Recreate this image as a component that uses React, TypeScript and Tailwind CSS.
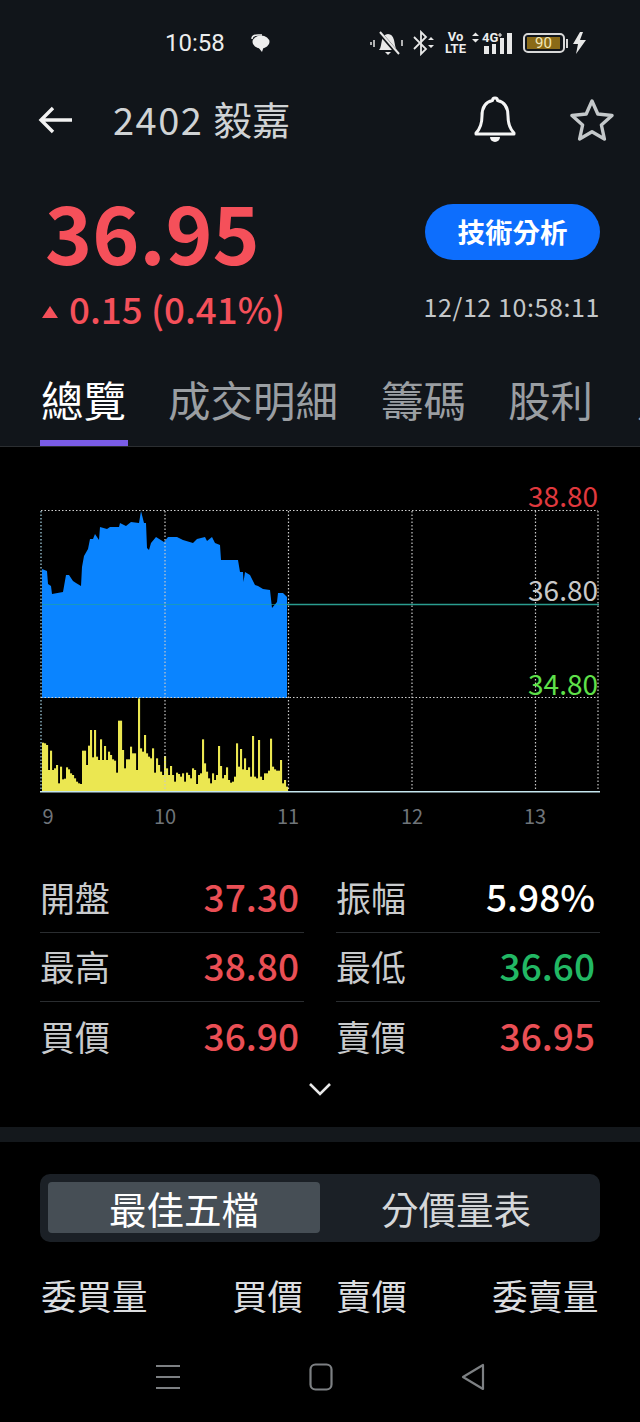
import React from "react";

const areaPoints =
  "42,569 47,571 48,584 51,586 52,594 63,592 66,575 69,575 73,581 76,583 81,586 82,567 84,556 88,549 90,539 93,539 95,534 99,540 100,527 107,529 110,527 119,527 120,523 126,526 131,522 139,523 141,511 144,523 146,523 147,548 149,550 151,543 156,537 164,542 168,537 177,537 183,540 193,543 197,539 205,537 207,541 212,537 215,543 220,545 221,560 238,560 240,572 243,572 243.5,582 245,572 250,575 255,585 258,586 263,589 270,590 272,608 277,602 278,593 283,593 287,597 287,698 42,698";

const volTops = [
  188, 190, 195, 270, 212, 270, 265, 255, 310, 260, 298, 296, 262, 268, 280, 285, 295, 305, 310, 312, 212, 212, 255, 197, 150, 232, 150, 230, 240, 178, 240, 198,
  240, 215, 225, 238, 242, 278, 122, 122, 210, 265, 238, 238, 200, 220, 220, 270, 55, 205, 215, 165, 220, 230, 235, 205, 278, 235, 255, 275, 285, 228, 265, 285,
  258, 285, 305, 278, 282, 290, 280, 305, 278, 285, 295, 265, 270, 312, 285, 280, 178, 250, 275, 295, 310, 280, 300, 285, 198, 258, 295, 285, 262, 300, 308, 305,
  290, 190, 260, 207, 268, 235, 270, 262, 290, 168, 290, 295, 180, 290, 300, 280, 280, 272, 176, 260, 268, 272, 272, 240, 310, 300, 320,
];

function Chart() {
  const vx = [41, 165, 288.5, 412, 535.5, 598];
  const hy = [510.5, 697.5];
  return (
    <div className="relative h-[384px] w-full">
      <svg width="640" height="384" viewBox="0 447 640 384" className="block">
        <polygon points={areaPoints} fill="#0a84ff" />
        {volTops.map((t, i) => {
          const top = t / 3 + 680;
          return <rect key={i} x={42 + i * 2} y={top} width={2.1} height={791.5 - top} fill="#ebe751" />;
        })}
        {vx.map((x) => (
          <line key={x} x1={x} x2={x} y1={511} y2={792} stroke={x === 41 ? "#a9d8e8" : "#c8c8c8"} strokeWidth={1.2} strokeDasharray="1.5 2" />
        ))}
        {hy.map((y) => (
          <line key={y} x1={41} x2={598} y1={y} y2={y} stroke="#cfcfcf" strokeWidth={1.2} strokeDasharray="1.5 2" />
        ))}
        <line x1={42} x2={287} y1={604.5} y2={604.5} stroke="#1ea59a" strokeOpacity={0.6} strokeWidth={1} />
        <line x1={287} x2={599} y1={604.5} y2={604.5} stroke="#2a9d8f" strokeWidth={1.3} />
        <line x1={40} x2={600} y1={791.8} y2={791.8} stroke="#c5e6ee" strokeWidth={1.6} />
        <g fontFamily="'Noto Sans CJK TC', sans-serif" fontSize="20" fill="#6f7479">
          <text x={48} y={824} textAnchor="middle">9</text>
          <text x={165} y={824} textAnchor="middle">10</text>
          <text x={288} y={824} textAnchor="middle">11</text>
          <text x={412} y={824} textAnchor="middle">12</text>
          <text x={535} y={824} textAnchor="middle">13</text>
        </g>
        <g fontFamily="'Noto Sans CJK TC', sans-serif" fontSize="28" textAnchor="end">
          <text x={598} y={507} fill="#e0393e">38.80</text>
          <text x={598} y={601} fill="#c9c9c9">36.80</text>
          <text x={598} y={695} fill="#5fe04a">34.80</text>
        </g>
      </svg>
    </div>
  );
}

function StatCell({ label, value, color }: { label: string; value: string; color: string }) {
  return (
    <div className="flex items-center justify-between h-[69.5px] pr-[5px] pb-[2px] border-b border-[#2a2d30] last:border-b-0">
      <span className="text-[35px] text-[#c9cbcd] leading-none">{label}</span>
      <span className={`text-[37px] font-medium leading-none ${color}`}>{value}</span>
    </div>
  );
}

function StatusBar() {
  return (
    <div className="h-[86px] flex items-center pl-[165px] pr-[54px] text-[#eceded]">
      <span className="text-[24px] leading-none w-[62px] font-[Roboto,sans-serif]">10:58</span>
      <svg width="22" height="20" viewBox="0 0 22 20" className="ml-[22px]">
        <ellipse cx="12" cy="9" rx="8.500" ry="6.500" fill="#eee" />
        <path d="M3 6c0-3 3-4 6-4h4" stroke="#eee" strokeWidth="1.500" fill="none" />
        <path d="M9 14l4 5 2-6z" fill="#eee" />
      </svg>
      <div className="flex-1" />
      <svg width="34" height="26" viewBox="0 0 34 26" className="mr-[8px]">
        <path d="M9 20c2-2 2-6 3-10 1-4 3-6 6-6s5 2 6 6c1 4 1 8 3 10z" fill="#e8e8e8" />
        <path d="M15 22h6l-3 3z" fill="#e8e8e8" />
        <path d="M9 2l19 22" stroke="#111519" strokeWidth="4" />
        <path d="M10 2l19 22" stroke="#e8e8e8" strokeWidth="2" />
        <path d="M1 12v3M4 10v7M32 10v6" stroke="#e8e8e8" strokeWidth="1.500" />
      </svg>
      <svg width="24" height="26" viewBox="0 0 24 26" className="mr-[11px]">
        <path d="M2 7l12 12-5 5V2l5 5L2 19" stroke="#e8e8e8" strokeWidth="1.800" fill="none" />
        <path d="M16 10l3-3 3 3zM16 15h6l-3 3z" fill="#e8e8e8" />
      </svg>
      <div className="flex flex-col items-center mr-[8px] text-[13px] font-bold leading-[12.5px] w-[17px] font-[Roboto,sans-serif]">
        <span>Vo</span>
        <span>LTE</span>
      </div>
      <div className="relative w-[40px] h-[22px] mr-[11px] font-[Roboto,sans-serif]">
        <span className="absolute left-[10px] top-[-1px] text-[13px] font-bold leading-[13px]">4G</span>
        <svg width="40" height="22" viewBox="0 0 40 22" className="absolute left-0 top-0">
          <path d="M0 4l3.500-3.500L7 4zM0 7h7l-3.500 3.500z" fill="#e8e8e8" />
          <path d="M26 3h4M28 1v4" stroke="#e8e8e8" strokeWidth="1.200" />
          <rect x="12" y="14" width="5" height="8" fill="#e8e8e8" />
          <rect x="20" y="12" width="4" height="10" fill="#e8e8e8" />
          <rect x="28" y="6" width="4" height="16" fill="#e8e8e8" />
          <rect x="35" y="1" width="5" height="21" fill="#e8e8e8" />
        </svg>
      </div>
      <div className="flex items-center mr-[5px]">
        <div className="w-[42px] h-[20px] border-2 border-[#d8d8d8] rounded-[5px] p-[2px]">
          <div className="w-[33px] h-full bg-[#8a6a17] flex items-center justify-center text-[15px] leading-none text-[#f2e7b8] font-[Roboto,sans-serif]">90</div>
        </div>
        <div className="w-[2px] h-[9px] bg-[#d8d8d8] ml-[1px]" />
      </div>
      <svg width="13" height="22" viewBox="0 0 13 22">
        <path d="M7 0L0 12h5l-2 10 10-14H7l3-8z" fill="#e8e8e8" />
      </svg>
    </div>
  );
}

export default function App() {
  return (
    <div className="w-[640px] h-[1422px] overflow-hidden bg-black text-white font-['Noto_Sans_CJK_TC',sans-serif]">
      <div className="bg-[#11151a] h-[447px] border-b border-[#2b2e31]">
        <StatusBar />
        <div className="h-[68px] flex items-center pl-[38px] pr-[26px]">
          <svg width="36" height="30" viewBox="0 0 36 30" className="mr-[39px]">
            <path d="M34 15H3M15 3L3 15l12 12" stroke="#f2f2f2" strokeWidth="3.400" fill="none" />
          </svg>
          <span className="flex items-baseline leading-none text-[#d0d3d5] whitespace-nowrap pb-[4px]">
            <span className="text-[38px] tracking-[1.500px]">2402</span>
            <span className="text-[38.500px] ml-[10px]">毅嘉</span>
          </span>
          <div className="flex-1" />
          <svg width="44" height="50" viewBox="0 0 44 50" className="mr-[53px]">
            <path d="M22 3c1.500 0 2.500 1 2.500 2.500C32 7 35 13 35 21c0 9 2 13 6 17v1H3v-1c4-4 6-8 6-17 0-8 3-14 10.500-15.500C19.500 4 20.500 3 22 3z" fill="none" stroke="#f5f5f5" strokeWidth="3" strokeLinejoin="round" />
            <path d="M17 42a5 5 0 0 0 10 0z" fill="#f5f5f5" />
          </svg>
          <svg width="44" height="44" viewBox="0 0 44 44">
            <path d="M22 3l5.800 13 14.200 1.500-10.600 9.500 3 14L22 33.800 9.600 41l3-14L2 17.500 16.200 16z" fill="none" stroke="#c4c8ca" strokeWidth="3.400" strokeLinejoin="round" />
          </svg>
        </div>
        <div className="flex items-start justify-between pl-[45px] pr-[40px] pt-[36px] h-[216px]">
          <div className="flex flex-col">
            <span className="text-[80px] leading-[80px] font-bold text-[#f5505a]">36.95</span>
            <div className="flex items-center mt-[18px]">
              <span className="w-0 h-0 border-x-[8px] border-x-transparent border-b-[12px] border-b-[#f5505a] mr-[11px] ml-[-3px] mt-[8px]" />
              <span className="text-[36.700px] leading-[40px] font-medium text-[#f5505a] whitespace-nowrap">0.15 (0.41%)</span>
            </div>
          </div>
          <div className="flex flex-col items-end">
            <div className="w-[175px] h-[56px] rounded-[28px] bg-[#0d6efd] flex items-center justify-center text-[27.500px] font-bold mt-[14px] pb-[1px]">技術分析</div>
            <span className="text-[25px] tracking-[0.600px] leading-none mt-[34px] text-[#c4c7c9] whitespace-nowrap">12/12 10:58:11</span>
          </div>
        </div>
        <div className="flex h-[76px] pl-[40px] text-[42.500px] leading-[50px] text-[#9a9ea2] whitespace-nowrap">
          <div className="w-[88px] shrink-0 border-b-[6px] border-[#7a5ce6] text-white pl-[1px] pt-[4px]">總覽</div>
          <div className="ml-[40px] shrink-0 pt-[4px]">成交明細</div>
          <div className="ml-[43px] shrink-0 pt-[4px]">籌碼</div>
          <div className="ml-[42px] shrink-0 pt-[4px]">股利</div>
          <div className="ml-[44px] shrink-0 pt-[4px]">財</div>
        </div>
      </div>

      <Chart />

      <div className="grid grid-cols-2 gap-x-[32px] px-[40px] mt-[32px]">
        <div className="flex flex-col">
          <StatCell label="開盤" value="37.30" color="text-[#ea4f55]" />
          <StatCell label="最高" value="38.80" color="text-[#ea4f55]" />
          <StatCell label="買價" value="36.90" color="text-[#ea4f55]" />
        </div>
        <div className="flex flex-col">
          <StatCell label="振幅" value="5.98%" color="text-white" />
          <StatCell label="最低" value="36.60" color="text-[#22b864]" />
          <StatCell label="賣價" value="36.95" color="text-[#ea4f55]" />
        </div>
      </div>

      <div className="flex justify-center mt-[9px] h-[20px]">
        <svg width="24" height="16" viewBox="0 0 24 16">
          <path d="M2 3l10 10L22 3" stroke="#e8e8e8" strokeWidth="2.600" fill="none" />
        </svg>
      </div>

      <div className="h-[15px] bg-[#14181c] mt-[26px]" />

      <div className="mx-[40px] mt-[32px] h-[68px] rounded-[10px] bg-[#1b2026] flex items-center px-[8px]">
        <div className="w-[272px] h-[51px] rounded-[4px] bg-[#464e55] flex items-center justify-center text-[37.500px] leading-none text-white">最佳五檔</div>
        <div className="flex-1 flex items-center justify-center text-[37.500px] leading-none text-[#d5d7d9]">分價量表</div>
      </div>

      <div className="flex px-[41px] mt-[35px] text-[35.500px] leading-none text-[#dcdee0] whitespace-nowrap">
        <span className="w-[191px]">委買量</span>
        <span className="w-[104px]">買價</span>
        <span className="w-[156px]">賣價</span>
        <span>委賣量</span>
      </div>

      <div className="flex justify-center items-center mt-[47px] h-[36px] gap-[128px]">
        <svg width="26" height="26" viewBox="0 0 26 26">
          <path d="M1 2h24M1 13h24M1 24h24" stroke="#7d8083" strokeWidth="2" />
        </svg>
        <svg width="24" height="28" viewBox="0 0 24 28">
          <rect x="1.500" y="1.500" width="21" height="25" rx="5" fill="none" stroke="#7d8083" strokeWidth="2.200" />
        </svg>
        <svg width="24" height="28" viewBox="0 0 24 28">
          <path d="M22 2v24L2 14z" fill="none" stroke="#7d8083" strokeWidth="2.200" strokeLinejoin="round" />
        </svg>
      </div>
    </div>
  );
}
